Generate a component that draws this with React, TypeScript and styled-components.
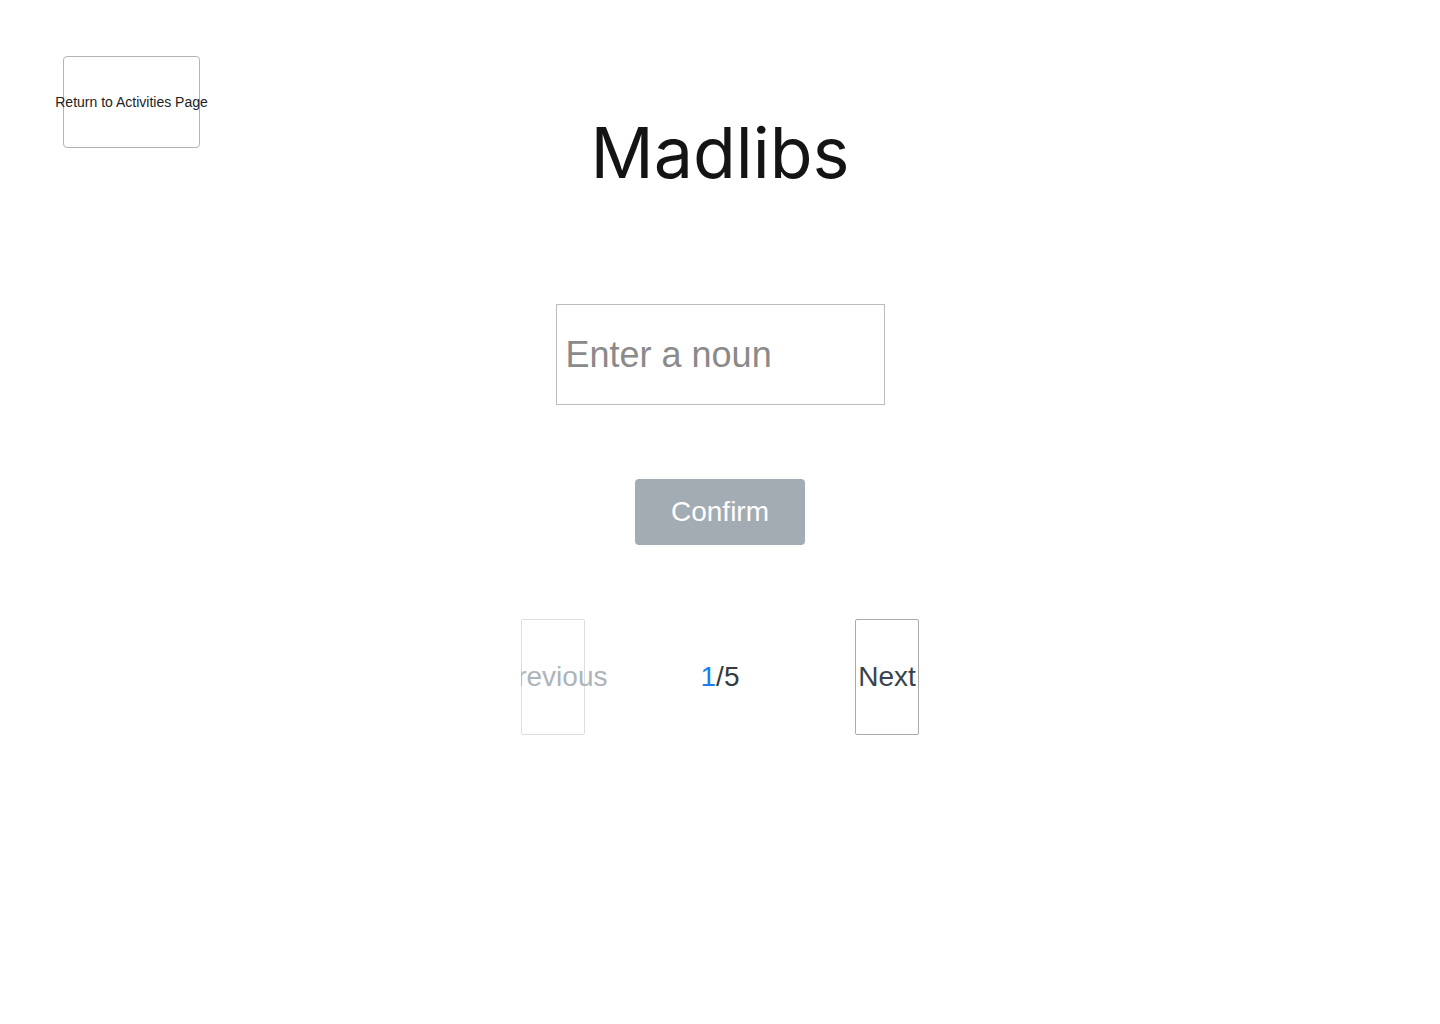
import styled, { createGlobalStyle } from 'styled-components';
import { useState } from 'react';

const GlobalStyle = createGlobalStyle`
  body {
    margin: 0;
    background: #ffffff;
    font-family: 'Liberation Sans', Arial, sans-serif;
  }
`;

export default function App() {
  const [word, setWord] = useState('');
  const page = 1;
  const total = 5;

  return (
    <Page>
      <GlobalStyle />
      <Header>
        <ReturnButton>Return to Activities Page</ReturnButton>
        <Title>Madlibs</Title>
      </Header>
      <Form>
        <WordInput
          placeholder="Enter a noun"
          value={word}
          onChange={(e) => setWord(e.target.value)}
        />
        <ConfirmButton disabled={word === ''}>Confirm</ConfirmButton>
      </Form>
      <Pager>
        <PageButton disabled>Previous</PageButton>
        <Counter>
          <Current>{page}</Current>/{total}
        </Counter>
        <PageButton>Next</PageButton>
      </Pager>
    </Page>
  );
}

const Page = styled.div`
  display: flex;
  flex-direction: column;
  align-items: center;
  min-height: 1024px;
`;

const Header = styled.div`
  width: 100%;
  display: grid;
  grid-template-columns: 1fr auto 1fr;
  align-items: start;
  padding-top: 56px;
`;

const ReturnButton = styled.button`
  justify-self: start;
  margin-left: 63px;
  width: 137px;
  height: 92px;
  padding: 0;
  background: #ffffff;
  border: 1px solid #b4b4b4;
  border-radius: 4px;
  font-family: 'Liberation Sans', Arial, sans-serif;
  font-size: 14px;
  color: #222;
  white-space: nowrap;
  display: flex;
  justify-content: center;
  align-items: center;
  cursor: pointer;
`;

const Title = styled.h1`
  margin: 61px 0 0;
  font-family: Inter, 'Noto Sans', sans-serif;
  font-size: 70px;
  font-weight: 400;
  line-height: 72px;
  color: #141414;
`;

const Form = styled.div`
  display: flex;
  flex-direction: column;
  align-items: center;
  gap: 74px;
  margin-top: 115px;
`;

const WordInput = styled.input`
  box-sizing: border-box;
  width: 329px;
  height: 101px;
  padding: 0 9px;
  border: 1px solid #bcbcbc;
  border-radius: 0;
  outline: none;
  font-family: 'Liberation Sans', Arial, sans-serif;
  font-size: 36px;
  color: #222;

  &::placeholder {
    color: #8a8a8a;
  }
`;

const ConfirmButton = styled.button`
  width: 170px;
  height: 66px;
  border: none;
  border-radius: 4px;
  background: #a3abb3;
  color: #ffffff;
  font-family: 'Liberation Sans', Arial, sans-serif;
  font-size: 28px;
  cursor: pointer;

  &:disabled {
    cursor: default;
  }
`;

const Pager = styled.div`
  width: 398px;
  margin-top: 74px;
  display: flex;
  justify-content: space-between;
  align-items: center;
  overflow: hidden;
`;

const PageButton = styled.button`
  width: 64px;
  height: 116px;
  padding: 0;
  background: #ffffff;
  border: 1px solid #ababab;
  border-radius: 2px;
  font-family: 'Liberation Sans', Arial, sans-serif;
  font-size: 28px;
  color: #37444e;
  white-space: nowrap;
  display: flex;
  justify-content: center;
  align-items: center;
  cursor: pointer;

  &:disabled {
    border-color: #dedede;
    color: #adb4ba;
    cursor: default;
  }
`;

const Counter = styled.span`
  font-family: 'Liberation Sans', Arial, sans-serif;
  font-size: 28px;
  color: #343a40;
`;

const Current = styled.span`
  color: #1a7ef2;
`;
